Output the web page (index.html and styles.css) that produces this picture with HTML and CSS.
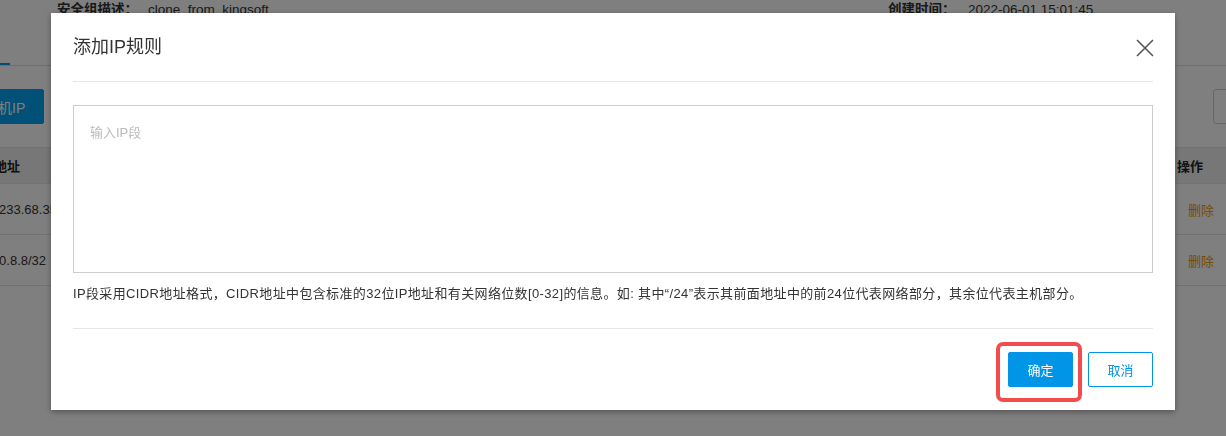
FILE: index.html
```html
<!DOCTYPE html>
<html lang="zh-CN">
<head>
    <meta charset="UTF-8">
    <meta name="viewport" content="width=device-width, initial-scale=1.0">
    <title>安全组详情</title>
    <link rel="stylesheet" href="styles.css">
</head>
<body>

<div class="page">
    <!-- 安全组基本信息 -->
    <div class="info-bar">
        <div class="info-item">
            <span class="info-label">安全组描述：</span>
            <span class="info-value">clone_from_kingsoft</span>
        </div>
        <div class="info-item info-item-last">
            <span class="info-label">创建时间：</span>
            <span class="info-value">2022-06-01 15:01:45</span>
        </div>
    </div>

    <div class="tabs">
        <div class="tab tab-active"></div>
    </div>

    <div class="toolbar">
        <button class="btn btn-primary btn-add">添加主机IP</button>
        <input class="search" type="text">
    </div>

    <table class="rules">
        <thead>
            <tr>
                <th class="col-ip">源地址</th>
                <th class="col-op">操作</th>
            </tr>
        </thead>
        <tbody>
            <tr>
                <td class="col-ip">43.233.68.35/32</td>
                <td class="col-op"><a class="link-danger">删除</a></td>
            </tr>
            <tr>
                <td class="col-ip">10.0.8.8/32</td>
                <td class="col-op"><a class="link-danger">删除</a></td>
            </tr>
        </tbody>
    </table>
</div>

<!-- 遮罩层和弹窗 -->
<div class="mask"></div>
<div class="dialog">
    <div class="dialog-header">
        <h3 class="dialog-title">添加IP规则</h3>
        <span class="dialog-close">
            <svg width="18" height="18" viewBox="0 0 18 18">
                <path d="M1 1 L17 17 M17 1 L1 17" stroke="#555" stroke-width="1.6" fill="none"/>
            </svg>
        </span>
    </div>
    <div class="dialog-body">
        <textarea class="ip-input" placeholder="输入IP段"></textarea>
        <p class="tip">IP段采用CIDR地址格式，CIDR地址中包含标准的32位IP地址和有关网络位数[0-32]的信息。如: 其中“/24”表示其前面地址中的前24位代表网络部分，其余位代表主机部分。</p>
    </div>
    <div class="dialog-footer">
        <span class="btn-wrap">
            <button class="btn btn-primary">确定</button>
            <span class="highlight"></span>
        </span>
        <button class="btn btn-default">取消</button>
    </div>
</div>

</body>
</html>
```

FILE: styles.css
```css
body {
    margin: 0;
    font-family: "Liberation Sans", "Noto Sans CJK SC", sans-serif;
    font-size: 13px;
    color: #333;
    background-color: #fff;
    overflow: hidden;
}
.page {
    width: 1226px;
    height: 436px;
}
.info-bar {
    display: flex;
    padding-left: 57px;
    line-height: 20px;
    font-size: 13.5px;
}
.info-item {
    display: flex;
    width: 831px;
}
.info-item-last {
    width: auto;
}
.info-label {
    width: 91px;
    font-weight: bold;
}
.info-item-last .info-label {
    width: 80px;
}
.tabs {
    height: 45px;
    border-bottom: 1px solid #ddd;
    display: flex;
    align-items: flex-end;
}
.tab {
    width: 10px;
    height: 2px;
}
.tab-active {
    background-color: #0a9ae8;
}
.toolbar {
    display: flex;
    justify-content: space-between;
    margin-top: 23px;
    margin-left: -63px;
    margin-right: -14px;
}
.search {
    width: 27px;
    height: 35px;
    box-sizing: border-box;
    border: 1px solid #ccc;
    border-radius: 3px;
}
.btn {
    height: 35px;
    min-width: 65px;
    padding: 0 14px;
    font-family: inherit;
    font-size: 13px;
    border-radius: 2px;
    cursor: pointer;
    box-sizing: border-box;
}
.btn-primary {
    background-color: #0095e6;
    border: 1px solid #0095e6;
    color: #fff;
}
.btn-add {
    padding: 0 18px;
    font-size: 14px;
    background-color: #00a0ee;
    border-color: #00a0ee;
}
.btn-default {
    background-color: #fff;
    border: 1px solid #0095e6;
    color: #0095e6;
}
.rules {
    margin-top: 23px;
    width: 1240px;
    border-collapse: collapse;
}
.rules th {
    height: 35px;
    background-color: #eee;
    text-align: left;
    font-weight: bold;
    color: #222;
    border-top: 1px solid #e4e4e4;
    border-bottom: 1px solid #e4e4e4;
    padding: 0;
}
.rules td {
    height: 50px;
    border-bottom: 1px solid #e4e4e4;
    padding: 0;
}
.rules .col-ip {
    padding-left: 0;
    text-indent: -19px;
}
.rules .col-op {
    width: 63px;
}
.rules td.col-op {
    padding-left: 11px;
    width: 52px;
}
.link-danger {
    color: #f39800;
}
.mask {
    position: fixed;
    top: 0;
    left: 0;
    right: 0;
    bottom: 0;
    background-color: rgba(0, 0, 0, 0.5);
}
.dialog {
    position: fixed;
    top: 13px;
    left: 51px;
    width: 1124px;
    padding: 0 22px;
    box-sizing: border-box;
    background-color: #fff;
    box-shadow: 0 2px 6px rgba(0, 0, 0, 0.35);
}
.dialog-header {
    display: flex;
    justify-content: space-between;
    height: 68px;
    border-bottom: 1px solid #e6e6e6;
}
.dialog-title {
    margin: 0;
    padding-top: 22px;
    font-size: 18px;
    font-weight: normal;
    line-height: 24px;
    color: #333;
}
.dialog-close {
    margin-top: 26px;
    margin-right: -1px;
    width: 18px;
    height: 18px;
    cursor: pointer;
}
.dialog-body {
    padding: 23px 0 24px;
    border-bottom: 1px solid #e6e6e6;
}
.ip-input {
    display: block;
    width: 100%;
    height: 168px;
    box-sizing: border-box;
    border: 1px solid #ccc;
    padding: 17px 16px;
    font-family: inherit;
    font-size: 13px;
    line-height: 20px;
    resize: none;
    outline: none;
}
.ip-input::placeholder {
    color: #bbb;
}
.tip {
    margin: 11px 0 0;
    line-height: 20px;
    color: #333;
    letter-spacing: 0.36px;
    white-space: nowrap;
}
.dialog-footer {
    display: flex;
    justify-content: flex-end;
    gap: 15px;
    padding: 23px 0;
}
.btn-wrap {
    position: relative;
    display: flex;
}
.highlight {
    position: absolute;
    top: -10px;
    left: -12px;
    right: -9px;
    bottom: -15px;
    border: 4px solid #f24c4c;
    border-radius: 7px;
}
```
